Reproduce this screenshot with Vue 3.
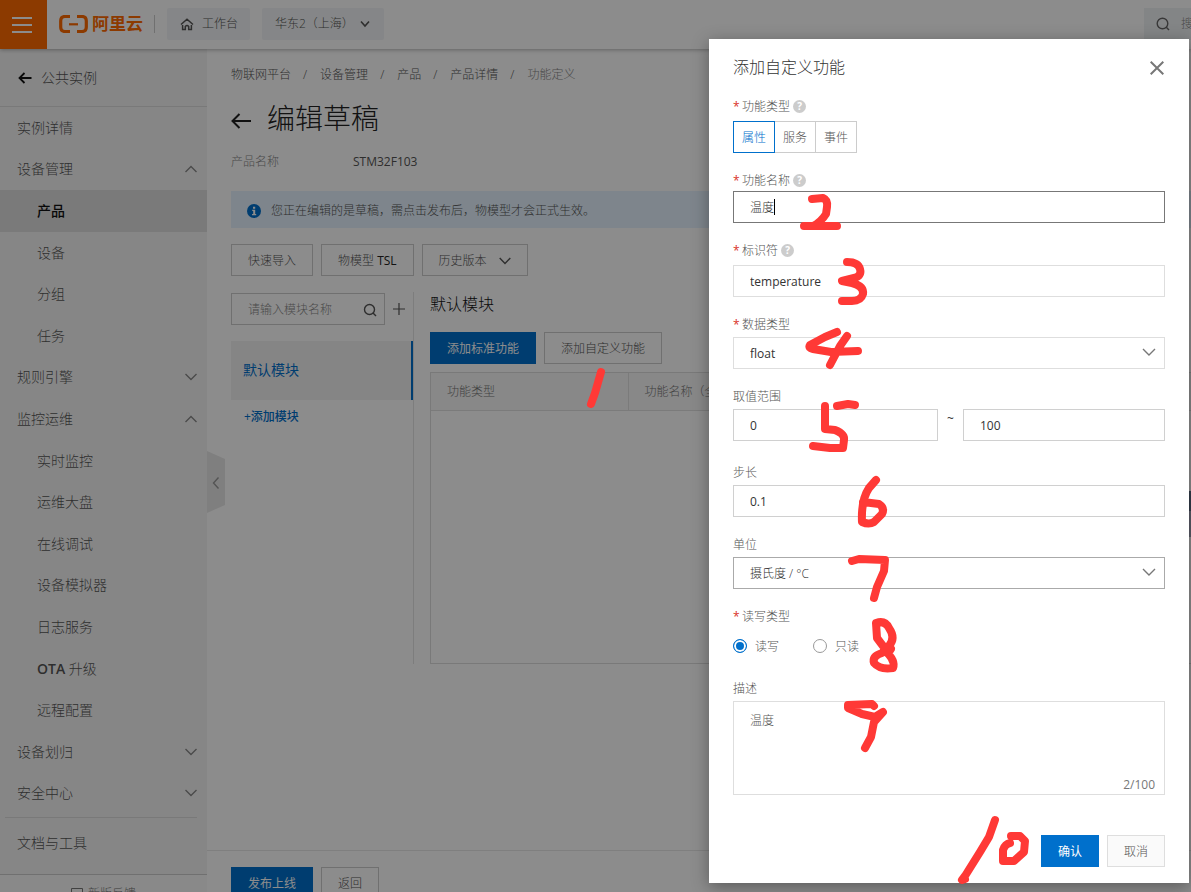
<script setup>
import { ref } from 'vue'

const nav = [
  { text: '实例详情' },
  { text: '设备管理', arrow: 'up' },
  { text: '产品', sub: true, active: true },
  { text: '设备', sub: true },
  { text: '分组', sub: true },
  { text: '任务', sub: true },
  { text: '规则引擎', arrow: 'down' },
  { text: '监控运维', arrow: 'up' },
  { text: '实时监控', sub: true },
  { text: '运维大盘', sub: true },
  { text: '在线调试', sub: true },
  { text: '设备模拟器', sub: true },
  { text: '日志服务', sub: true },
  { strong: 'OTA', text: ' 升级', sub: true },
  { text: '远程配置', sub: true },
  { text: '设备划归', arrow: 'down' },
  { text: '安全中心', arrow: 'down' },
]
const crumbs = ['物联网平台', '设备管理', '产品', '产品详情']
const kinds = ['属性', '服务', '事件']

const kind = ref('属性')
const name = ref('温度')
const identifier = ref('temperature')
const dataType = ref('float')
const min = ref('0')
const max = ref('100')
const step = ref('0.1')
const unit = ref('摄氏度 / °C')
const access = ref('rw')
const description = ref('温度')

const marks = [
  'M601 372 L597 386 L595 393 L591 404',
  'M812 199 L823 198 Q828 200 827 207 L826 214 Q821 222 813 226 L804 226 L837 226',
  'M847 262 Q858 262 860 269 Q862 276 854 278 L842 281 L852 283 Q864 286 863 294 Q861 301 852 301 L842 301',
  'M837 332 L825 337 L810 345 Q808 348 813 349 L831 352 L858 351 M847 336 L840 346 L830 365',
  'M825 406 L825 429 L835 430 Q845 434 844 440 L843 448 L830 448 L813 446 M837 406 L848 404 L855 405',
  'M876 480 L869 488 Q861 500 862 522 Q869 525 874 522 L882 514 Q885 508 879 504 L863 502',
  'M852 561 L859 559 L885 560 L884 571 L877 587 L874 598',
  'M891 649 L883 646 L877 638 L876 623 Q885 620 889 628 Q896 638 889 646 L882 653 Q872 656 874 663 Q880 670 893 668 Q896 660 884 650',
  'M874 706 L872 704 L848 705 L848 708 L862 714 L875 717 L883 712 L874 722 L871 737 L865 748',
  'M995 820 L989 837 L980 852 L965 876 L962 880 L965 879',
  'M1011 836 L1020 836 L1025 841 L1024 852 L1014 861 L1003 861 L1003 850 Q1005 844 1010 843',
]
</script>

<template>
  <div class="page">
    <header class="top">
      <button class="burger" type="button" aria-label="菜单"><i></i><i></i><i></i></button>
      <a class="logo" href="#">
        <svg width="29" height="18" viewBox="0 0 29 18" fill="none" stroke="currentColor">
          <path d="M11 1.500H6Q1.700 1.500 1.700 6V12Q1.700 16.500 6 16.500H11M18 1.500H23Q27.300 1.500 27.300 6V12Q27.300 16.500 23 16.500H18" stroke-width="3.200" />
          <path d="M10 9.300H19" stroke-width="2.200" />
        </svg>
        <span>阿里云</span>
      </a>
      <i class="split"></i>
      <button class="chip" type="button">
        <svg width="14" height="14" viewBox="0 0 14 14" fill="none" stroke="currentColor" stroke-width="1.500">
          <path d="M1 7.500 7 2.200 13 7.500M2.600 8V12.600H5.300V9.500Q7 7.500 8.700 9.500V12.600H11.400V8" />
        </svg>
        <span>工作台</span>
      </button>
      <button class="chip region" type="button">
        <span>华东2（上海）</span>
        <svg width="10" height="8" viewBox="0 0 10 8" fill="none" stroke="currentColor" stroke-width="1.600"><path d="M1 1.500 5 6 9 1.500" /></svg>
      </button>
      <label class="top-search">
        <svg width="14" height="14" viewBox="0 0 14 14" fill="none" stroke="currentColor" stroke-width="1.400"><circle cx="6.500" cy="6.500" r="5.300" /><path d="M10.300 10.300 13 13" /></svg>
        <input type="search" placeholder="搜索" aria-label="搜索" />
      </label>
    </header>

    <div class="body">
      <aside class="side">
        <a class="back" href="#">
          <svg width="14" height="12" viewBox="0 0 14 12" fill="none" stroke="currentColor" stroke-width="1.800"><path d="M13.500 6H1.500M6.500 1 1.500 6 6.500 11" /></svg>
          <span>公共实例</span>
        </a>
        <ul class="nav">
          <li v-for="n in nav" :key="n.text" :class="{ sub: n.sub, active: n.active }">
            <a href="#">
              <span><b v-if="n.strong">{{ n.strong }}</b>{{ n.text }}</span>
              <svg v-if="n.arrow" width="14" height="8" viewBox="0 0 14 8" fill="none" stroke="currentColor" stroke-width="1.400">
                <path :d="n.arrow === 'up' ? 'M1.5 7 7 1.5 12.5 7' : 'M1.5 1 7 6.5 12.5 1'" />
              </svg>
            </a>
          </li>
        </ul>
        <a class="docs" href="#">文档与工具</a>
        <a class="feedback" href="#">
          <svg width="12" height="12" viewBox="0 0 12 12" fill="none" stroke="currentColor"><path d="M.5 .5H11.500V9.500H.5Z" /></svg>
          <span>新版反馈</span>
        </a>
      </aside>

      <main class="main">
        <button class="fold" type="button" aria-label="收起">
          <svg width="8" height="12" viewBox="0 0 8 12" fill="none" stroke="currentColor" stroke-width="1.400"><path d="M6.500 .5 1.500 6 6.500 11.500" /></svg>
        </button>
        <div class="content">
          <nav class="crumbs">
            <template v-for="c in crumbs" :key="c"><a href="#">{{ c }}</a><i>/</i></template>
            <span>功能定义</span>
          </nav>
          <div class="heading">
            <svg width="20" height="16" viewBox="0 0 20 16" fill="none" stroke="currentColor" stroke-width="2"><path d="M20 8H1.500M8.500 1 1.500 8 8.500 15" /></svg>
            <h1>编辑草稿</h1>
          </div>
          <dl class="meta"><dt>产品名称</dt><dd>STM32F103</dd></dl>
          <p class="notice">
            <svg width="14" height="14" viewBox="0 0 14 14"><circle cx="7" cy="7" r="7" fill="#0070cc" /><path d="M6 2.800H8.200V4.700H6ZM5.200 5.800H8.200V10H9.200V11.200H5V10H6.200V7H5.200Z" fill="#fff" /></svg>
            <span>您正在编辑的是草稿，需点击发布后，物模型才会正式生效。</span>
          </p>
          <div class="tools">
            <button class="btn" type="button">快速导入</button>
            <button class="btn" type="button">物模型 <em>TSL</em></button>
            <button class="btn" type="button"><span>历史版本</span><svg width="12" height="8" viewBox="0 0 12 8" fill="none" stroke="currentColor" stroke-width="1.400"><path d="M.7 1 6 6.500 11.300 1" /></svg></button>
          </div>
          <div class="split-view">
            <section class="modules">
              <div class="find">
                <label class="find-box">
                  <input type="text" placeholder="请输入模块名称" aria-label="请输入模块名称" />
                  <svg width="14" height="14" viewBox="0 0 14 14" fill="none" stroke="currentColor" stroke-width="1.400"><circle cx="6.500" cy="6.500" r="5" /><path d="M10 10 13 13" /></svg>
                </label>
                <button class="plus" type="button" aria-label="添加">
                  <svg width="12" height="12" viewBox="0 0 12 12" fill="none" stroke="currentColor"><path d="M6 0V12M0 6H12" stroke-width="1.200" /></svg>
                </button>
              </div>
              <a class="module" href="#">默认模块</a>
              <a class="add-module" href="#">+添加模块</a>
            </section>
            <section class="features">
              <h2>默认模块</h2>
              <div class="tools">
                <button class="btn primary" type="button">添加标准功能</button>
                <button class="btn" type="button">添加自定义功能</button>
              </div>
              <div class="table-box">
                <table>
                  <thead><tr><th>功能类型</th><th>功能名称（全部）</th><th></th></tr></thead>
                </table>
              </div>
            </section>
          </div>
        </div>
        <footer class="actions">
          <button class="btn primary" type="button">发布上线</button>
          <button class="btn" type="button">返回</button>
        </footer>
      </main>
    </div>

    <i class="float"></i>
    <div class="mask"></div>

    <form class="dialog" role="dialog" aria-labelledby="dialog-title" @submit.prevent>
      <div class="dialog-head">
        <h2 id="dialog-title">添加自定义功能</h2>
        <button type="button" aria-label="关闭">
          <svg width="14" height="14" viewBox="0 0 14 14" fill="none" stroke="currentColor" stroke-width="2"><path d="M.7 .7 13.300 13.300M13.300 .7 .7 13.300" /></svg>
        </button>
      </div>

      <div class="field">
        <div class="label loose"><i>*</i>功能类型<span class="help">?</span></div>
        <div class="kinds">
          <button v-for="k in kinds" :key="k" type="button" :class="{ on: k === kind }" @click="kind = k">{{ k }}</button>
        </div>
      </div>
      <div class="field">
        <label class="label tight" for="f-name"><i>*</i>功能名称<span class="help">?</span></label>
        <div class="box focus"><input id="f-name" v-model="name" type="text" /><span class="caret"></span></div>
      </div>
      <div class="field">
        <label class="label loose" for="f-id"><i>*</i>标识符<span class="help">?</span></label>
        <div class="box"><input id="f-id" v-model="identifier" type="text" /></div>
      </div>
      <div class="field">
        <label class="label" for="f-type"><i>*</i>数据类型</label>
        <div class="box">
          <select id="f-type" v-model="dataType"><option>float</option><option>int32</option></select>
          <svg width="14" height="8" viewBox="0 0 14 8" fill="none" stroke="currentColor" stroke-width="1.400"><path d="M1 1 7 7 13 1" /></svg>
        </div>
      </div>
      <div class="field range-field">
        <label class="label" for="f-min">取值范围</label>
        <div class="range">
          <div class="box firm"><input id="f-min" v-model="min" type="text" /></div>
          <span>~</span>
          <div class="box firm"><input v-model="max" type="text" aria-label="最大值" /></div>
        </div>
      </div>
      <div class="field">
        <label class="label" for="f-step">步长</label>
        <div class="box firm"><input id="f-step" v-model="step" type="text" /></div>
      </div>
      <div class="field">
        <label class="label" for="f-unit">单位</label>
        <div class="box hover">
          <select id="f-unit" v-model="unit"><option>摄氏度 / °C</option></select>
          <svg width="14" height="8" viewBox="0 0 14 8" fill="none" stroke="currentColor" stroke-width="1.400"><path d="M1 1 7 7 13 1" /></svg>
        </div>
      </div>
      <div class="field">
        <div class="label"><i>*</i>读写类型</div>
        <div class="radios">
          <label><input v-model="access" type="radio" name="access" value="rw" /><span>读写</span></label>
          <label><input v-model="access" type="radio" name="access" value="r" /><span>只读</span></label>
        </div>
      </div>
      <div class="field">
        <label class="label" for="f-desc">描述</label>
        <div class="area">
          <textarea id="f-desc" v-model="description" maxlength="100"></textarea>
          <span>{{ description.length }}/100</span>
        </div>
      </div>
      <div class="dialog-foot">
        <button class="btn primary" type="submit">确认</button>
        <button class="btn pale" type="button">取消</button>
      </div>
    </form>

    <svg class="marks" width="1191" height="892" viewBox="0 0 1191 892" aria-hidden="true">
      <path v-for="m in marks" :key="m" :d="m" />
    </svg>
  </div>
</template>

<style>
body { margin: 0; }
</style>

<style scoped>
.page {
  position: relative;
  display: flex;
  flex-direction: column;
  height: 100vh;
  overflow: hidden;
  background: #fff;
  color: #555;
  font-family: "Open Sans", "Noto Sans CJK SC", sans-serif;
  font-size: 12px;
  font-weight: 300;
  line-height: 20px;
}
.page *, .page *::before { box-sizing: border-box; }
button, input, select, textarea { font: inherit; color: inherit; margin: 0; padding: 0; border: 0; background: none; outline: 0; }
a { color: inherit; text-decoration: none; }
svg { display: block; flex: none; }
h1, h2, p, dl, dd, ul { margin: 0; padding: 0; font-weight: 300; }
i, em { font-style: normal; }
em { color: #222; font-weight: 400; }

.top {
  position: relative;
  z-index: 1;
  flex: none;
  display: flex;
  align-items: center;
  height: 49px;
  padding-bottom: 1px;
  background: #fff;
  box-shadow: 0 1px 4px rgba(0, 0, 0, .3);
}
.burger { display: flex; flex-direction: column; align-items: center; justify-content: center; align-self: flex-start; gap: 5px; width: 47px; height: 49px; padding-right: 3px; background: #ff6a00; }
.burger i { width: 20px; height: 2px; background: #fff; }
.logo { display: flex; align-items: center; gap: 4px; margin-left: 12px; color: #ff6a00; font-size: 17px; font-weight: 700; }
.split { width: 1px; height: 18px; margin: 0 12px 0 11px; background: #ccc; }
.chip { display: flex; align-items: center; gap: 8px; height: 32px; padding: 0 12px 0 13px; background: #f3f5f7; border-radius: 2px; color: #555; }
.region { margin-left: 12px; gap: 6px; padding: 0 14px 0 13px; }
.top-search { display: flex; align-items: center; gap: 11px; width: 47px; height: 32px; margin-left: auto; padding-left: 12px; background: #eff2f5; overflow: hidden; color: #666; }
.top-search input { flex: none; width: 120px; }

.body { flex: 1; display: flex; min-height: 0; }
.side { flex: none; display: flex; flex-direction: column; width: 207px; background: #f5f5f5; font-size: 14px; overflow: hidden; }
.back { flex: none; display: flex; align-items: center; gap: 9px; height: 58px; padding-left: 18px; border-bottom: 1px solid #ddd; }
.back svg { color: #111; }
.nav { flex: 1; display: flex; flex-direction: column; list-style: none; }
.nav li { flex: 1; display: flex; }
.nav a { flex: 1; display: flex; align-items: center; justify-content: space-between; padding: 0 9px 0 17px; }
.nav svg { color: #888; }
.nav .sub a { padding-left: 37px; }
.nav .active { background: #dedede; color: #111; font-weight: 500; }
.nav b { font-weight: 600; }
.docs { flex: none; margin: 3px 10px 0 5px; padding: 15px 12px 21px; border-top: 1px solid #ddd; }
.feedback { flex: none; display: flex; justify-content: center; gap: 5px; height: 18px; padding-top: 11px; border-top: 1px solid #ccc; background: #fafafa; font-size: 12px; line-height: 16px; overflow: hidden; color: #777; }
.feedback svg { margin-top: 2px; }

.main { position: relative; flex: 1; display: flex; flex-direction: column; min-width: 0; }
.fold { position: absolute; left: 0; top: 402px; display: flex; align-items: center; justify-content: center; width: 18px; height: 62px; padding-top: 2px; background: #e8e8e8; clip-path: polygon(0 0, 100% 13%, 100% 87%, 0 100%); color: #999; }
.content { flex: 1; min-height: 0; padding: 16px 0 0 24px; overflow: hidden; }
.crumbs { display: flex; }
.crumbs i { margin: 0 13px 0 12px; }
.crumbs span { color: #888; }
.heading { display: flex; align-items: center; gap: 16px; margin-top: 12px; color: #222; }
.heading svg { margin-top: 5px; }
.heading h1 { font-size: 28px; line-height: 42px; }
.meta { display: flex; margin-top: 13px; }
.meta dt { width: 122px; color: #888; }
.meta dd { font-weight: 400; }
.notice { display: flex; align-items: center; gap: 10px; height: 37px; margin-top: 19px; padding: 2px 0 0 16px; background: #e5f3ff; }
.tools { display: flex; gap: 8px; }
.notice + .tools { margin-top: 16px; }
.btn { display: flex; align-items: center; height: 32px; padding: 2px 16px 0; border: 1px solid #ccc; color: #555; white-space: pre; line-height: 20px; }
.btn em { color: #222; }
.btn svg { margin-left: 12px; }
.primary { border-color: #0070cc; background: #0070cc; color: #fff; font-weight: 400; }
.pale { border-color: #dedede; background: #fafafa; }
.split-view { display: flex; height: 372px; margin-top: 16px; }
.modules { flex: none; width: 183px; border-right: 1px solid #e3e3e3; }
.find { display: flex; align-items: center; height: 34px; }
.find-box { display: flex; align-items: center; width: 154px; height: 32px; padding: 2px 7px 0 16px; border: 1px solid #ccc; }
.find-box input { flex: 1; min-width: 0; }
input::placeholder { color: #888; opacity: 1; }
.plus { margin-left: 8px; }
.module { display: flex; align-items: center; height: 59px; margin-top: 15px; padding: 0 0 2px 12px; border-right: 2px solid #0070cc; background: #f3f3f3; color: #0070cc; font-size: 14px; font-weight: 400; }
.add-module { display: block; margin: 7px 0 0 13px; color: #0070cc; font-weight: 500; }
.features { flex: 1; display: flex; flex-direction: column; min-width: 0; padding-left: 16px; }
.features h2 { margin-bottom: 16px; color: #111; font-size: 16px; line-height: 24px; }
.table-box { flex: 1; margin-top: 8px; border: 1px solid #ddd; border-right: 0; }
table { width: 100%; border-collapse: collapse; table-layout: fixed; }
th { width: 197px; height: 37px; padding: 2px 16px 0; border-right: 1px solid #e0e0e0; border-bottom: 1px solid #e0e0e0; background: #f7f7f7; color: #777; font-weight: 300; text-align: left; white-space: nowrap; }
th:last-child { width: auto; border-right: 0; }
.actions { flex: none; display: flex; gap: 8px; height: 42px; padding: 16px 0 0 24px; border-top: 1px solid #e8e8e8; overflow: hidden; }

.float { position: absolute; z-index: 1; right: 0; top: 491px; width: 40px; height: 46px; background: linear-gradient(#5d7088 0 20px, #a5a8bc 20px); }
.mask { position: absolute; inset: 0; z-index: 2; background: rgba(0, 0, 0, .45); }

.dialog { position: absolute; z-index: 3; top: 39px; right: 2px; width: 480px; padding: 16px 24px; background: #fff; box-shadow: 0 4px 16px rgba(0, 0, 0, .35); }
.dialog-head { display: flex; align-items: center; justify-content: space-between; color: #333; }
.dialog-head h2 { font-size: 16px; line-height: 24px; }
.dialog-head button { padding-top: 2px; margin-right: 1px; color: #777; }
.field { margin-top: 16px; }
.label { display: flex; align-items: center; height: 20px; margin-bottom: 4px; padding-top: 3px; color: #555; }
.loose { margin-bottom: 6px; }
.tight { margin-bottom: 2px; }
.label i { width: 9px; color: #d93026; font-weight: 400; }
.help { display: flex; align-items: center; justify-content: center; width: 13px; height: 13px; margin-left: 3px; border-radius: 50%; background: #ccc; color: #fff; font-size: 10px; font-weight: 700; line-height: 13px; }
.kinds { display: flex; }
.kinds button { height: 32px; padding: 2px 8px 0; border: 1px solid #ccc; border-left: 0; }
.kinds .on { border: 1px solid #0070cc; color: #0070cc; }
.box { position: relative; display: flex; align-items: center; height: 32px; border: 1px solid #dedede; color: #333; font-weight: 400; }
.box input, .box select { flex: 1; min-width: 0; height: 30px; padding: 0 16px; appearance: none; }
.box select { padding-top: 2px; }
.box svg { position: absolute; right: 8px; top: 10px; color: #777; pointer-events: none; }
.firm { border-color: #d0d0d0; }
.hover { border-color: #aaa; }
.focus { border-color: #777; }
.focus input, .hover select, .area textarea { font-weight: 300; }
.caret { position: absolute; left: 40px; top: 7px; width: 1px; height: 16px; background: #000; }
.range { display: grid; grid-template-columns: 205fr 25px 202fr; text-align: center; color: #333; font-weight: 400; }
.range-field + .field { margin-top: 20px; }
.radios { display: flex; align-items: center; gap: 34px; height: 32px; padding-top: 2px; }
.radios label { display: flex; align-items: center; gap: 8px; }
.radios span { padding-top: 2px; }
.radios input { appearance: none; width: 14px; height: 14px; border: 1px solid #999; border-radius: 50%; }
.radios input:checked { border-color: #0070cc; background: #0070cc; box-shadow: inset 0 0 0 2px #fff; }
.area { position: relative; height: 94px; border: 1px solid #dedede; }
.area textarea { display: block; width: 100%; height: 92px; padding: 9px 16px; resize: none; }
.area span { position: absolute; right: 9px; bottom: 0; line-height: 18px; color: #777; font-weight: 400; }
.dialog-foot { display: flex; justify-content: flex-end; gap: 8px; margin-top: 40px; }

.marks { position: absolute; z-index: 4; top: 0; right: 0; pointer-events: none; }
.marks path { fill: none; stroke: #ff3936; stroke-width: 8px; stroke-linecap: round; stroke-linejoin: round; }
</style>
